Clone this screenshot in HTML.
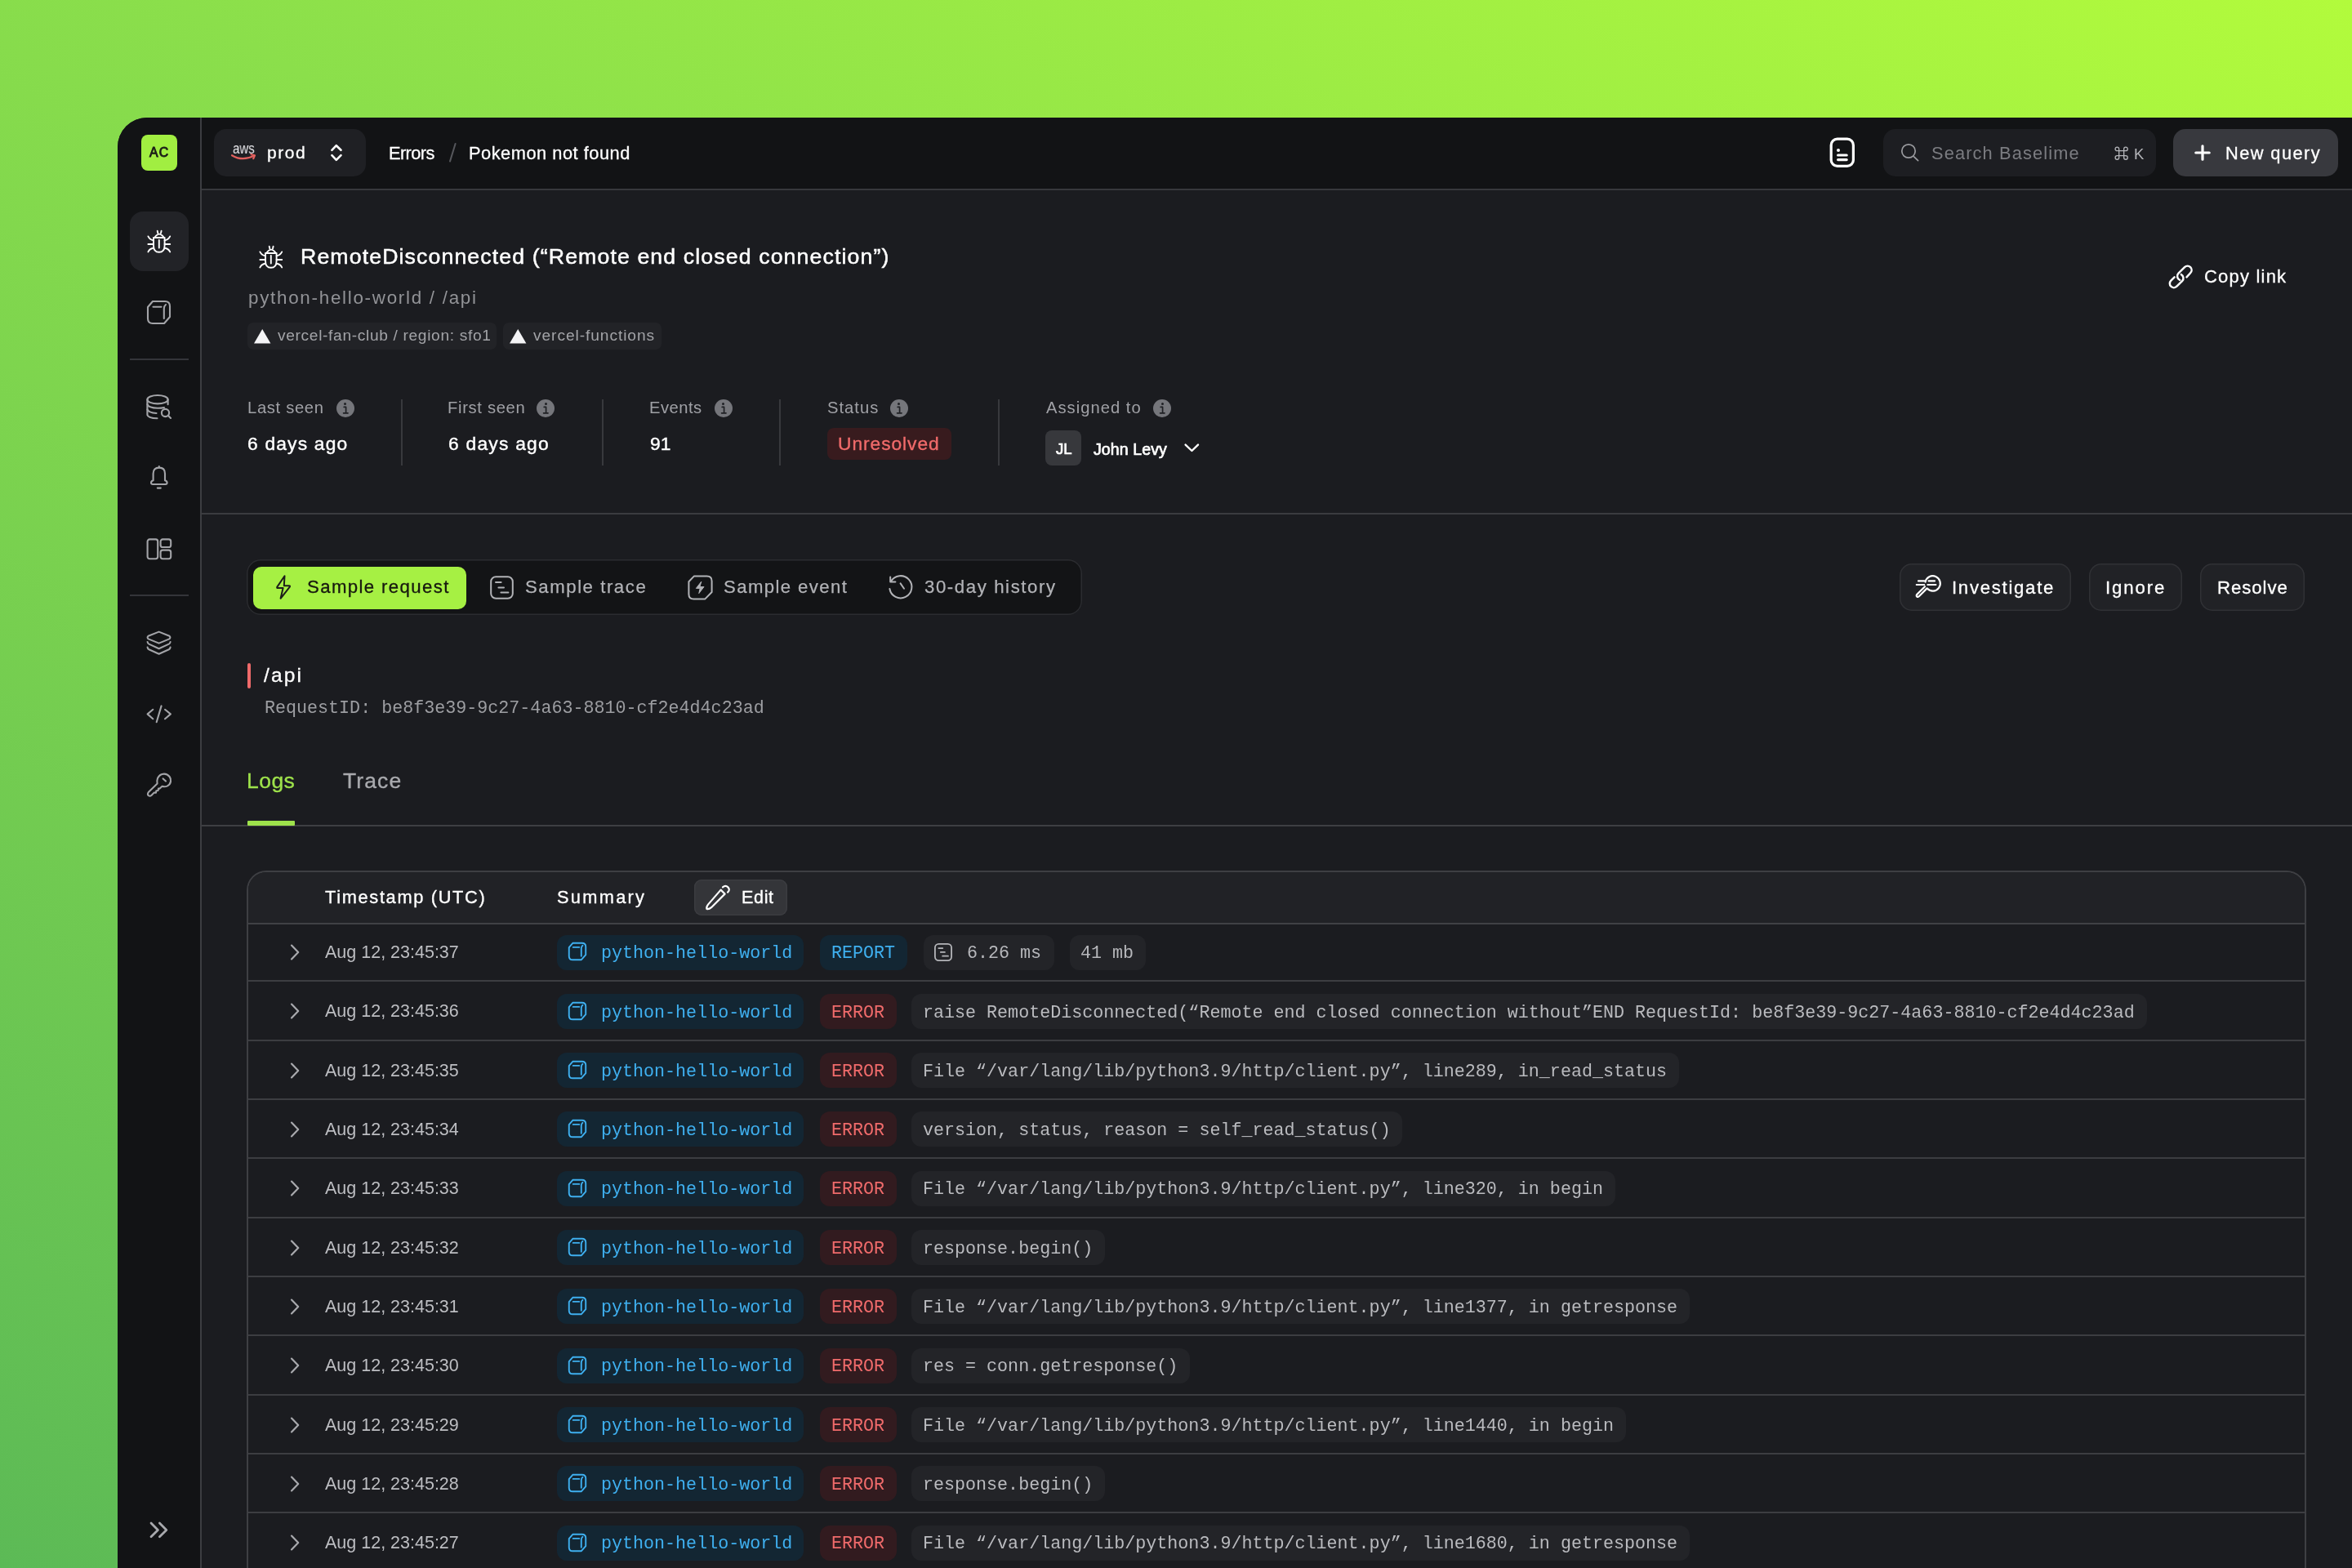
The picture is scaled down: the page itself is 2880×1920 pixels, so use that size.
<!DOCTYPE html>
<html><head><meta charset="utf-8"><style>
html,body{margin:0;padding:0;width:2880px;height:1920px;overflow:hidden}
body{position:relative;background:linear-gradient(30deg,#5cba56 0%,#8bdf4b 57%,#b2fb3c 100%);font-family:"Liberation Sans",sans-serif}
.a{position:absolute}
.t{white-space:nowrap;will-change:transform}
.S{font-family:"Liberation Sans",sans-serif}
.M{font-family:"Liberation Mono",monospace}
svg{overflow:visible}
</style></head><body>
<div class="a" style="left:144px;top:144px;width:2736px;height:1776px;background:#1b1c20;border-top-left-radius:36px;overflow:hidden"><div class="a" style="left:0;top:0;width:102px;height:1776px;background:#121315"></div><div class="a" style="left:102px;top:0;width:2634px;height:87px;background:#121315"></div></div>
<div class="a" style="left:245px;top:144px;width:2px;height:1776px;background:#3c3d41;"></div>
<div class="a" style="left:247px;top:230.5px;width:2633px;height:2px;background:#37383c;"></div>
<div class="a" style="left:173px;top:165px;width:44px;height:44px;background:#a1ee41;border-radius:8px;"></div>
<div class="a t S" style="left:183.30px;top:179.13px;font-size:15.8px;line-height:15.8px;color:#1c1e18;letter-spacing:1.164px;-webkit-text-stroke:0.9px #1c1e18;">AC</div>
<div class="a" style="left:159px;top:259px;width:72px;height:73px;background:#222327;border-radius:16px;"></div>
<div class="a" style="left:159px;top:439px;width:72px;height:2px;background:#34353a;"></div>
<div class="a" style="left:159px;top:728px;width:72px;height:2px;background:#34353a;"></div>
<svg class="a" style="left:180px;top:282px;" width="30" height="28" viewBox="0 0 30 28" fill="none" stroke="#ffffff" stroke-width="1.9" stroke-linecap="round" stroke-linejoin="round"><path d="M12.7 0.8 L13.3 3.4 M17.6 0.8 L17 3.4"/><path d="M9.4 8.8 Q15 0.4 20.6 8.8"/><path d="M8 9 H21.6 V18.5 Q21.6 26.8 14.8 26.8 Q8 26.8 8 18.5 Z"/><path d="M14.8 12 V21.6"/><path d="M1.4 7.4 Q3.5 11.6 8 12.4 M28.2 7.4 Q26.1 11.6 21.6 12.4"/><path d="M1.4 17 H8 M21.6 17 H28.2"/><path d="M1.4 26.4 Q3.5 22.4 8 21.8 M28.2 26.4 Q26.1 22.4 21.6 21.8"/></svg>
<svg class="a" style="left:180px;top:368px;" width="30" height="30" viewBox="0 0 30 30" fill="none" stroke="#a3a4a8" stroke-width="2.1" stroke-linecap="round" stroke-linejoin="round"><path d="M7.00 1.00 H22.00 Q28.00 1.00 28.00 7.00 V20.00 L21.00 28.00 H7.00 Q1.00 28.00 1.00 22.00 V8.00 Z"/><path d="M7.50 7.80 H17.50"/><path d="M20.80 22.00 V10.00 Q20.80 6.80 23.00 5.00"/></svg>
<svg class="a" style="left:179px;top:482px;" width="32" height="32" viewBox="0 0 32 32" fill="none" stroke="#a3a4a8" stroke-width="2.1" stroke-linecap="round" stroke-linejoin="round"><ellipse cx="14" cy="7.2" rx="12.6" ry="5.2"/><path d="M1.4 7.2 V25.4 Q1.4 30 13.5 30.3"/><path d="M26.6 7.2 V13.2"/><path d="M1.4 13.2 Q3 17.6 14 17.8 Q19 17.8 22 17"/><path d="M1.4 19.4 Q3 23.4 12.5 24"/><circle cx="23.5" cy="23.5" r="4.6"/><path d="M26.8 26.8 L30 30"/></svg>
<svg class="a" style="left:183px;top:569px;" width="24" height="32" viewBox="0 0 24 32" fill="none" stroke="#a3a4a8" stroke-width="2.1" stroke-linecap="round" stroke-linejoin="round"><path d="M11.8 2 V3.4"/><path d="M4.6 19.2 V11 Q4.6 3.6 11.8 3.6 Q19 3.6 19 11 V19.2 Q21.6 20 21.6 22 Q21.6 24 19.6 24 H4 Q2 24 2 22 Q2 20 4.6 19.2 Z"/><path d="M9.8 28.6 H13.8"/></svg>
<svg class="a" style="left:179px;top:659px;" width="32" height="27" viewBox="0 0 32 27" fill="none" stroke="#a3a4a8" stroke-width="2.1" stroke-linecap="round" stroke-linejoin="round"><rect x="1.6" y="1.4" width="12.6" height="23.8" rx="2.6"/><rect x="17.6" y="1.4" width="12.6" height="9.6" rx="2.6"/><rect x="17.6" y="14.6" width="12.6" height="10.6" rx="2.6"/></svg>
<svg class="a" style="left:179px;top:772px;" width="32" height="32" viewBox="0 0 32 32" fill="none" stroke="#a3a4a8" stroke-width="2.1" stroke-linecap="round" stroke-linejoin="round"><path d="M15.6 1.6 L28.4 6.8 Q30.4 8.6 28.4 10.4 L15.6 15.6 L2.6 10.4 Q0.6 8.6 2.6 6.8 Z"/><path d="M1.6 14 Q1.8 15.8 3.4 16.6 L15.6 22.2 L27.8 16.6 Q29.4 15.8 29.6 14"/><path d="M1.6 20.6 Q1.8 22.4 3.4 23.2 L15.6 28.8 L27.8 23.2 Q29.4 22.4 29.6 20.6"/></svg>
<svg class="a" style="left:179px;top:862px;" width="32" height="24" viewBox="0 0 32 24" fill="none" stroke="#a3a4a8" stroke-width="2.1" stroke-linecap="round" stroke-linejoin="round"><path d="M8.3 6.8 L1.6 12.4 L8.3 18.2"/><path d="M18.6 2.4 L12.7 22.3"/><path d="M23 6.8 L29.9 12.4 L23 18.2"/></svg>
<svg class="a" style="left:179px;top:946px;" width="32" height="32" viewBox="0 0 32 32" fill="none" stroke="#a3a4a8" stroke-width="2.1" stroke-linecap="round" stroke-linejoin="round"><path d="M22 1.6 Q26 1.6 28.6 5 Q30.6 7.6 30 11 Q29.4 14.6 25.6 16.6 Q22.6 17.8 19.6 16.8 L16.6 19.6 L15 19.6 L14.6 22 L12.4 22.2 L12 24.6 L9.6 24.6 L6.6 27.8 Q4.6 29.6 2.6 28 Q1.2 26.4 2.8 24 L13.6 13.4 Q12.8 10.4 14 7 Q16.4 1.6 22 1.6 Z"/><path d="M20.6 7.4 L24 10.6"/></svg>
<svg class="a" style="left:180.5px;top:1862px;" width="30" height="24" viewBox="0 0 30 24" fill="none" stroke="#a8a9ad" stroke-width="2.8" stroke-linecap="round" stroke-linejoin="round"><path d="M4 3 L12.4 11.4 L4 19.8"/><path d="M14.4 3 L22.8 11.4 L14.4 19.8"/></svg>
<div class="a" style="left:261.5px;top:158px;width:186.5px;height:58px;background:#1f2024;border-radius:15px;"></div>
<div class="a t S" style="left:284.50px;top:173.99px;font-size:17.5px;line-height:17.5px;color:#e6e6ea;transform:scaleX(0.86);transform-origin:0 0;">aws</div>
<svg class="a" style="left:282px;top:186px;" width="34" height="12" viewBox="0 0 34 12" fill="none" stroke="#e2605e" stroke-width="2.2" stroke-linecap="round" stroke-linejoin="round"><path d="M2 4.2 Q15 12 29 4.6"/><path d="M25.6 3.2 L30 4.2 L28.2 8.2"/></svg>
<div class="a t S" style="left:326.90px;top:175.62px;font-size:21px;line-height:21px;color:#ffffff;letter-spacing:1.549px;-webkit-text-stroke:0.3px #ffffff;">prod</div>
<svg class="a" style="left:403px;top:175px;" width="18" height="24" viewBox="0 0 18 24" fill="none" stroke="#ffffff" stroke-width="2.6" stroke-linecap="round" stroke-linejoin="round"><path d="M3.4 8.8 L8.8 3.2 L14.5 8.8"/><path d="M3.4 15.2 L8.8 20.9 L14.5 15.2"/></svg>
<div class="a t S" style="left:476.30px;top:176.95px;font-size:21.8px;line-height:21.8px;color:#ffffff;letter-spacing:-0.587px;-webkit-text-stroke:0.3px #ffffff;">Errors</div>
<svg class="a" style="left:546px;top:172px;" width="16" height="30" viewBox="0 0 16 30" fill="none" stroke="#56575c" stroke-width="2" stroke-linecap="round" stroke-linejoin="round"><path d="M11.6 4 L5 25.6"/></svg>
<div class="a t S" style="left:573.80px;top:176.95px;font-size:21.8px;line-height:21.8px;color:#ffffff;letter-spacing:0.518px;-webkit-text-stroke:0.3px #ffffff;">Pokemon not found</div>
<svg class="a" style="left:2238px;top:166px;" width="36" height="42" viewBox="0 0 36 42" fill="none" stroke="#ffffff" stroke-width="3.2" stroke-linecap="round" stroke-linejoin="round"><rect x="4.2" y="4.2" width="27.2" height="33.2" rx="7.5"/><path d="M12.6 24 H23.2 M12.6 29.6 H23.2"/></svg>
<div class="a" style="left:2250.7px;top:181.6px;width:4.2px;height:4.2px;border-radius:50%;background:#fff;margin-left:-2.1px;margin-top:0px"></div>
<div class="a" style="left:2306px;top:158px;width:333.5px;height:58px;background:#1d1e22;border-radius:15px;"></div>
<svg class="a" style="left:2324px;top:173px;" width="30" height="30" viewBox="0 0 30 30" fill="none" stroke="#9a9b9f" stroke-width="1.7" stroke-linecap="round" stroke-linejoin="round"><circle cx="13" cy="12" r="8.2"/><path d="M19.6 18.8 L24.6 23.6"/></svg>
<div class="a t S" style="left:2364.50px;top:177.05px;font-size:21.8px;line-height:21.8px;color:#7b7c81;letter-spacing:1.133px;">Search Baselime</div>
<svg class="a" style="left:2587.5px;top:177.5px;transform:scale(0.88);transform-origin:0 0;" width="24" height="22" viewBox="0 0 24 22" fill="none" stroke="#b4b5b9" stroke-width="1.5" stroke-linecap="round" stroke-linejoin="round"><path d="M7.6 7.6 H14.4 V14.4 H7.6 Z"/><path d="M7.6 7.6 V5 A2.6 2.6 0 1 0 5 7.6 H7.6 M14.4 7.6 V5 A2.6 2.6 0 1 1 17 7.6 H14.4 M14.4 14.4 V17 A2.6 2.6 0 1 0 17 14.4 H14.4 M7.6 14.4 V17 A2.6 2.6 0 1 1 5 14.4 H7.6"/></svg>
<div class="a t S" style="left:2612.90px;top:179.64px;font-size:18.5px;line-height:18.5px;color:#b4b5b9;">K</div>
<div class="a" style="left:2661.2px;top:158px;width:202px;height:58px;background:#38393e;border-radius:15px;"></div>
<svg class="a" style="left:2684px;top:174px;" width="26" height="26" viewBox="0 0 26 26" fill="none" stroke="#ffffff" stroke-width="3.2" stroke-linecap="round" stroke-linejoin="round"><path d="M13 4.8 V21.2 M4.8 13 H21.2"/></svg>
<div class="a t S" style="left:2725.30px;top:177.05px;font-size:21.8px;line-height:21.8px;color:#ffffff;letter-spacing:1.427px;-webkit-text-stroke:0.3px #ffffff;">New query</div>
<svg class="a" style="left:317px;top:301px;" width="30" height="28" viewBox="0 0 30 28" fill="none" stroke="#ffffff" stroke-width="1.9" stroke-linecap="round" stroke-linejoin="round"><path d="M12.7 0.8 L13.3 3.4 M17.6 0.8 L17 3.4"/><path d="M9.4 8.8 Q15 0.4 20.6 8.8"/><path d="M8 9 H21.6 V18.5 Q21.6 26.8 14.8 26.8 Q8 26.8 8 18.5 Z"/><path d="M14.8 12 V21.6"/><path d="M1.4 7.4 Q3.5 11.6 8 12.4 M28.2 7.4 Q26.1 11.6 21.6 12.4"/><path d="M1.4 17 H8 M21.6 17 H28.2"/><path d="M1.4 26.4 Q3.5 22.4 8 21.8 M28.2 26.4 Q26.1 22.4 21.6 21.8"/></svg>
<div class="a t S" style="left:367.60px;top:300.90px;font-size:26.7px;line-height:26.7px;color:#ffffff;letter-spacing:1.115px;-webkit-text-stroke:0.5px #ffffff;">RemoteDisconnected (&#8220;Remote end closed connection&#8221;)</div>
<div class="a t S" style="left:303.60px;top:353.54px;font-size:22.4px;line-height:22.4px;color:#929397;letter-spacing:1.719px;">python-hello-world / /api</div>
<div class="a" style="left:303.1px;top:394.9px;width:305.3px;height:33px;background:#222327;border-radius:7px;"></div>
<svg class="a" style="left:309px;top:401px;" width="25" height="22" viewBox="0 0 25 22" fill="none" stroke="#a6a7ab" stroke-width="2" stroke-linecap="round" stroke-linejoin="round"><path d="M12.2 2 L22.4 19.4 H2 Z" fill="#f4f4f6" stroke="none"/></svg>
<div class="a t S" style="left:339.50px;top:401.35px;font-size:19.2px;line-height:19.2px;color:#a3a4a8;letter-spacing:0.648px;">vercel-fan-club / region: sfo1</div>
<div class="a" style="left:616.1px;top:394.9px;width:194px;height:33px;background:#222327;border-radius:7px;"></div>
<svg class="a" style="left:622px;top:401px;" width="25" height="22" viewBox="0 0 25 22" fill="none" stroke="#a6a7ab" stroke-width="2" stroke-linecap="round" stroke-linejoin="round"><path d="M12.2 2 L22.4 19.4 H2 Z" fill="#f4f4f6" stroke="none"/></svg>
<div class="a t S" style="left:652.50px;top:401.35px;font-size:19.2px;line-height:19.2px;color:#a3a4a8;letter-spacing:0.915px;">vercel-functions</div>
<svg class="a" style="left:2650px;top:320px;" width="40" height="38" viewBox="0 0 40 38" fill="none" stroke="#ffffff" stroke-width="2.5" stroke-linecap="round" stroke-linejoin="round"><path d="M27.50 19.30 L32.14 14.24 A5.0 5.0 0 0 0 25.06 7.16 L17.51 14.71 A5.0 5.0 0 0 0 19.18 22.89"/><path d="M20.85 16.14 A5.0 5.0 0 0 1 22.04 24.09 L15.39 30.74 A5.0 5.0 0 0 1 8.31 23.66 L12.60 19.40"/></svg>
<div class="a t S" style="left:2698.60px;top:328.08px;font-size:22px;line-height:22px;color:#ffffff;letter-spacing:1.202px;-webkit-text-stroke:0.3px #ffffff;">Copy link</div>
<div class="a t S" style="left:303.40px;top:489.20px;font-size:20.2px;line-height:20.2px;color:#a0a1a6;letter-spacing:0.673px;">Last seen</div>
<div class="a" style="left:411.7px;top:488.8px;width:22px;height:22px;border-radius:11px;background:#75767b"></div>
<svg class="a" style="left:411.7px;top:488.8px;" width="22" height="22" viewBox="0 0 22 22" fill="none" stroke="#1f2024" stroke-width="1.7" stroke-linecap="round" stroke-linejoin="round"><path d="M9.2 9.4 H11.6 V16.8 M8.6 16.8 H14" /></svg>
<div class="a" style="left:421.2px;top:493.2px;width:3px;height:3px;border-radius:50%;background:#1f2024"></div>
<div class="a t S" style="left:303.40px;top:531.90px;font-size:22.8px;line-height:22.8px;color:#ffffff;letter-spacing:1.183px;-webkit-text-stroke:0.4px #ffffff;">6 days ago</div>
<div class="a" style="left:490.5px;top:489px;width:2px;height:81px;background:#38393d;"></div>
<div class="a t S" style="left:548.30px;top:489.20px;font-size:20.2px;line-height:20.2px;color:#a0a1a6;letter-spacing:0.678px;">First seen</div>
<div class="a" style="left:657.4px;top:488.8px;width:22px;height:22px;border-radius:11px;background:#75767b"></div>
<svg class="a" style="left:657.4px;top:488.8px;" width="22" height="22" viewBox="0 0 22 22" fill="none" stroke="#1f2024" stroke-width="1.7" stroke-linecap="round" stroke-linejoin="round"><path d="M9.2 9.4 H11.6 V16.8 M8.6 16.8 H14" /></svg>
<div class="a" style="left:666.9px;top:493.2px;width:3px;height:3px;border-radius:50%;background:#1f2024"></div>
<div class="a t S" style="left:549.00px;top:531.90px;font-size:22.8px;line-height:22.8px;color:#ffffff;letter-spacing:1.238px;-webkit-text-stroke:0.4px #ffffff;">6 days ago</div>
<div class="a" style="left:737px;top:489px;width:2px;height:81px;background:#38393d;"></div>
<div class="a t S" style="left:795.00px;top:489.20px;font-size:20.2px;line-height:20.2px;color:#a0a1a6;letter-spacing:0.476px;">Events</div>
<div class="a" style="left:874.5px;top:488.8px;width:22px;height:22px;border-radius:11px;background:#75767b"></div>
<svg class="a" style="left:874.5px;top:488.8px;" width="22" height="22" viewBox="0 0 22 22" fill="none" stroke="#1f2024" stroke-width="1.7" stroke-linecap="round" stroke-linejoin="round"><path d="M9.2 9.4 H11.6 V16.8 M8.6 16.8 H14" /></svg>
<div class="a" style="left:884.0px;top:493.2px;width:3px;height:3px;border-radius:50%;background:#1f2024"></div>
<div class="a t S" style="left:795.50px;top:531.90px;font-size:22.8px;line-height:22.8px;color:#ffffff;-webkit-text-stroke:0.4px #ffffff;">91</div>
<div class="a" style="left:953.5px;top:489px;width:2px;height:81px;background:#38393d;"></div>
<div class="a t S" style="left:1012.60px;top:489.20px;font-size:20.2px;line-height:20.2px;color:#a0a1a6;letter-spacing:1.013px;">Status</div>
<div class="a" style="left:1089.6px;top:488.8px;width:22px;height:22px;border-radius:11px;background:#75767b"></div>
<svg class="a" style="left:1089.6px;top:488.8px;" width="22" height="22" viewBox="0 0 22 22" fill="none" stroke="#1f2024" stroke-width="1.7" stroke-linecap="round" stroke-linejoin="round"><path d="M9.2 9.4 H11.6 V16.8 M8.6 16.8 H14" /></svg>
<div class="a" style="left:1099.1px;top:493.2px;width:3px;height:3px;border-radius:50%;background:#1f2024"></div>
<div class="a" style="left:1012.6px;top:523.7px;width:152px;height:39.5px;background:#381b1e;border-radius:8px;"></div>
<div class="a t S" style="left:1026.00px;top:532.30px;font-size:22.8px;line-height:22.8px;color:#f06b6b;letter-spacing:0.930px;-webkit-text-stroke:0.35px #f06b6b;">Unresolved</div>
<div class="a" style="left:1221.5px;top:489px;width:2px;height:81px;background:#38393d;"></div>
<div class="a t S" style="left:1280.80px;top:489.20px;font-size:20.2px;line-height:20.2px;color:#a0a1a6;letter-spacing:1.014px;">Assigned to</div>
<div class="a" style="left:1412.3px;top:488.8px;width:22px;height:22px;border-radius:11px;background:#75767b"></div>
<svg class="a" style="left:1412.3px;top:488.8px;" width="22" height="22" viewBox="0 0 22 22" fill="none" stroke="#1f2024" stroke-width="1.7" stroke-linecap="round" stroke-linejoin="round"><path d="M9.2 9.4 H11.6 V16.8 M8.6 16.8 H14" /></svg>
<div class="a" style="left:1421.8px;top:493.2px;width:3px;height:3px;border-radius:50%;background:#1f2024"></div>
<div class="a" style="left:1280.2px;top:526.7px;width:43.5px;height:43.5px;background:#37383c;border-radius:8px;"></div>
<div class="a t S" style="left:1293.00px;top:541.26px;font-size:18.6px;line-height:18.6px;color:#ffffff;-webkit-text-stroke:0.7px #ffffff;">JL</div>
<div class="a t S" style="left:1339.00px;top:541.31px;font-size:19.6px;line-height:19.6px;color:#ffffff;letter-spacing:0.060px;-webkit-text-stroke:0.7px #ffffff;">John Levy</div>
<svg class="a" style="left:1447px;top:540px;" width="26" height="18" viewBox="0 0 26 18" fill="none" stroke="#ffffff" stroke-width="2.4" stroke-linecap="round" stroke-linejoin="round"><path d="M4.6 4.6 L12.4 12 L20 4.6"/></svg>
<div class="a" style="left:247px;top:628px;width:2633px;height:2px;background:#3a3b3f;"></div>
<div class="a" style="left:302.3px;top:685.4px;width:1023px;height:68px;background:#131416;border-radius:17px;box-shadow:inset 0 0 0 1.5px #2b2c30;"></div>
<div class="a" style="left:309.9px;top:693.5px;width:261px;height:52.6px;background:#a6f043;border-radius:10px;"></div>
<svg class="a" style="left:334px;top:702px;" width="26" height="34" viewBox="0 0 26 34" fill="none" stroke="#1c1d1a" stroke-width="2" stroke-linecap="round" stroke-linejoin="round"><path d="M13.5 3.2 L4.4 16.6 Q3.6 18 5.2 18 H11.6 L8.6 30.8 L19.8 16.6 Q20.6 15.2 19 15.2 H12.8 Z" transform="translate(1,0)"/></svg>
<div class="a t S" style="left:375.50px;top:707.71px;font-size:22.2px;line-height:22.2px;color:#17180f;letter-spacing:1.382px;-webkit-text-stroke:0.3px #17180f;">Sample request</div>
<svg class="a" style="left:599.5px;top:704.5px;" width="30" height="30" viewBox="0 0 30 30" fill="none" stroke="#b2b3b7" stroke-width="2" stroke-linecap="round" stroke-linejoin="round"><rect x="1.20" y="1.20" width="26.60" height="26.60" rx="6.00"/><path d="M7.00 8.00 H13.60 M10.40 14.40 H17.00 M13.40 20.60 H22.40"/></svg>
<div class="a t S" style="left:642.60px;top:708.21px;font-size:22.2px;line-height:22.2px;color:#b2b3b7;letter-spacing:1.547px;-webkit-text-stroke:0.25px #b2b3b7;">Sample trace</div>
<svg class="a" style="left:841.5px;top:703.5px;" width="31" height="31" viewBox="0 0 31 31" fill="none" stroke="#b2b3b7" stroke-width="2" stroke-linecap="round" stroke-linejoin="round"><path d="M8 1.4 H23.6 Q29.6 1.4 29.6 7.4 V21 L21.4 29.4 H7.4 Q1.4 29.4 1.4 23.4 V8.2 Z"/><path d="M16.6 8.4 L10.4 16.4 H15.2 L13.8 22.6 L20 14.6 H15.2 Z" fill="#b2b3b7" stroke-width="1"/></svg>
<div class="a t S" style="left:885.80px;top:708.21px;font-size:22.2px;line-height:22.2px;color:#b2b3b7;letter-spacing:1.390px;-webkit-text-stroke:0.25px #b2b3b7;">Sample event</div>
<svg class="a" style="left:1087px;top:703px;" width="32" height="32" viewBox="0 0 32 32" fill="none" stroke="#b2b3b7" stroke-width="2" stroke-linecap="round" stroke-linejoin="round"><path d="M4 9 A13.6 13.6 0 1 1 2.4 18"/><path d="M3.2 3.4 V9.6 H9.4"/><path d="M15.6 11.4 L20 17.8"/></svg>
<div class="a t S" style="left:1132.00px;top:708.21px;font-size:22.2px;line-height:22.2px;color:#b2b3b7;letter-spacing:1.595px;-webkit-text-stroke:0.25px #b2b3b7;">30-day history</div>
<div class="a" style="left:2326px;top:690px;width:210px;height:58px;background:#212226;border-radius:15px;box-shadow:inset 0 0 0 1.5px #303135;"></div>
<svg class="a" style="left:2344px;top:701.3px;" width="36" height="34" viewBox="0 0 36 34" fill="none" stroke="#ffffff" stroke-width="2.2" stroke-linecap="round" stroke-linejoin="round"><path d="M15.8 19.6 A9.2 9.2 0 1 0 13.6 11.6"/><path d="M17.6 10.4 H25 M16.4 15 H26.4"/><path d="M5 10.4 H12.2 M2.8 15 H12.2"/><path d="M15.4 19.6 L6 29 Q4.4 30.6 3.2 29.4 Q2 28.2 3.6 26.6 L13 17.2"/></svg>
<div class="a t S" style="left:2390.00px;top:709.01px;font-size:22.2px;line-height:22.2px;color:#ffffff;letter-spacing:1.703px;-webkit-text-stroke:0.3px #ffffff;">Investigate</div>
<div class="a" style="left:2558px;top:690px;width:113.5px;height:58px;background:#212226;border-radius:15px;box-shadow:inset 0 0 0 1.5px #303135;"></div>
<div class="a t S" style="left:2578.00px;top:709.01px;font-size:22.2px;line-height:22.2px;color:#ffffff;letter-spacing:1.886px;-webkit-text-stroke:0.3px #ffffff;">Ignore</div>
<div class="a" style="left:2694px;top:690px;width:128px;height:58px;background:#212226;border-radius:15px;box-shadow:inset 0 0 0 1.5px #303135;"></div>
<div class="a t S" style="left:2714.60px;top:709.01px;font-size:22.2px;line-height:22.2px;color:#ffffff;letter-spacing:0.930px;-webkit-text-stroke:0.3px #ffffff;">Resolve</div>
<div class="a" style="left:303px;top:812px;width:4px;height:31px;background:#ef6a6a;border-radius:2px;"></div>
<div class="a t S" style="left:322.60px;top:815.16px;font-size:24.5px;line-height:24.5px;color:#ffffff;letter-spacing:2.114px;-webkit-text-stroke:0.3px #ffffff;">/api</div>
<div class="a t M" style="left:324.30px;top:856.77px;font-size:21.7px;line-height:21.7px;color:#9d9ea2;">RequestID: be8f3e39-9c27-4a63-8810-cf2e4d4c23ad</div>
<div class="a t S" style="left:301.70px;top:943.17px;font-size:26.5px;line-height:26.5px;color:#9ee24b;letter-spacing:0.462px;-webkit-text-stroke:0.35px #9ee24b;">Logs</div>
<div class="a t S" style="left:420.00px;top:943.17px;font-size:26.5px;line-height:26.5px;color:#a9aaae;letter-spacing:1.096px;-webkit-text-stroke:0.35px #a9aaae;">Trace</div>
<div class="a" style="left:247px;top:1010.2px;width:2633px;height:2px;background:#3e3f43;"></div>
<div class="a" style="left:303px;top:1005px;width:58px;height:6px;background:#9ee24b;border-radius:1px;"></div>
<div class="a" style="left:302px;top:1066px;width:2522px;height:900px;border-radius:24px 24px 0 0;background:#1b1c20;box-shadow:inset 0 0 0 2px #3e3f43"></div>
<div class="a" style="left:304px;top:1068px;width:2518px;height:62px;border-radius:22px 22px 0 0;background:#212226"></div>
<div class="a" style="left:304px;top:1130px;width:2518px;height:2px;background:#404145;"></div>
<div class="a t S" style="left:398.10px;top:1088.15px;font-size:21.8px;line-height:21.8px;color:#ffffff;letter-spacing:1.672px;-webkit-text-stroke:0.35px #ffffff;">Timestamp (UTC)</div>
<div class="a t S" style="left:681.70px;top:1088.15px;font-size:21.8px;line-height:21.8px;color:#ffffff;letter-spacing:2.291px;-webkit-text-stroke:0.35px #ffffff;">Summary</div>
<div class="a" style="left:849.5px;top:1076.8px;width:114.3px;height:44.1px;background:#343539;border-radius:9px;box-shadow:inset 0 0 0 1.5px #3b3c40;"></div>
<svg class="a" style="left:862px;top:1082px;" width="34" height="34" viewBox="0 0 34 34" fill="none" stroke="#ffffff" stroke-width="2.2" stroke-linecap="round" stroke-linejoin="round"><path d="M20.6 7.6 L25.6 12.6 L9 29.2 Q6 31.8 3.4 31 Q2.6 28.4 5.2 25.4 Z"/><path d="M23 4.4 Q26.4 1.4 29.4 4.4 Q32.4 7.4 29 10.6"/></svg>
<div class="a t S" style="left:907.75px;top:1088.32px;font-size:21.6px;line-height:21.6px;color:#ffffff;letter-spacing:0.613px;-webkit-text-stroke:0.35px #ffffff;">Edit</div>
<div class="a" style="left:304px;top:1200.3px;width:2518px;height:2px;background:#3c3d41;"></div>
<svg class="a" style="left:350px;top:1152.0px;" width="22" height="28" viewBox="0 0 22 28" fill="none" stroke="#a9aaae" stroke-width="2.2" stroke-linecap="round" stroke-linejoin="round"><path d="M7 5.6 L15.2 14 L7 22.4"/></svg>
<div class="a t S" style="left:398.10px;top:1156.00px;font-size:21.5px;line-height:21.5px;color:#bdbec2;">Aug 12, 23:45:37</div>
<div class="a" style="left:681.6px;top:1144.5px;width:302px;height:43px;background:#132633;border-radius:12px;"></div>
<svg class="a" style="left:695.5px;top:1154.4px;" width="23" height="23" viewBox="0 0 23 23" fill="none" stroke="#3fb0f0" stroke-width="1.9" stroke-linecap="round" stroke-linejoin="round"><path d="M5.31 0.76 H16.69 Q21.24 0.76 21.24 5.31 V15.17 L15.93 21.24 H5.31 Q0.76 21.24 0.76 16.69 V6.07 Z"/><path d="M5.69 5.92 H13.28"/><path d="M15.78 16.69 V7.59 Q15.78 5.16 17.45 3.79"/></svg>
<div class="a t M" style="left:735.80px;top:1157.17px;font-size:21.7px;line-height:21.7px;color:#3fb0f0;">python-hello-world</div>
<div class="a" style="left:1003.8px;top:1144.5px;width:107.7px;height:43px;background:#132633;border-radius:12px;"></div>
<div class="a t M" style="left:1018.10px;top:1157.17px;font-size:21.7px;line-height:21.7px;color:#3fb0f0;">REPORT</div>
<div class="a" style="left:1130.5px;top:1144.5px;width:160.5px;height:43px;background:#232428;border-radius:12px;"></div>
<svg class="a" style="left:1144.2px;top:1155.0px;" width="23" height="23" viewBox="0 0 23 23" fill="none" stroke="#b4b5b9" stroke-width="1.8" stroke-linecap="round" stroke-linejoin="round"><rect x="0.91" y="0.91" width="20.18" height="20.18" rx="4.55"/><path d="M5.31 6.07 H10.32 M7.89 10.92 H12.90 M10.17 15.63 H16.99"/></svg>
<div class="a t M" style="left:1183.90px;top:1157.17px;font-size:21.7px;line-height:21.7px;color:#b6b7bb;">6.26 ms</div>
<div class="a" style="left:1309.8px;top:1144.5px;width:93.2px;height:43px;background:#232428;border-radius:12px;"></div>
<div class="a t M" style="left:1323.00px;top:1157.17px;font-size:21.7px;line-height:21.7px;color:#b6b7bb;">41 mb</div>
<div class="a" style="left:304px;top:1272.6299999999999px;width:2518px;height:2px;background:#3c3d41;"></div>
<svg class="a" style="left:350px;top:1224.33px;" width="22" height="28" viewBox="0 0 22 28" fill="none" stroke="#a9aaae" stroke-width="2.2" stroke-linecap="round" stroke-linejoin="round"><path d="M7 5.6 L15.2 14 L7 22.4"/></svg>
<div class="a t S" style="left:398.10px;top:1228.33px;font-size:21.5px;line-height:21.5px;color:#bdbec2;">Aug 12, 23:45:36</div>
<div class="a" style="left:681.6px;top:1216.83px;width:302px;height:43px;background:#132633;border-radius:12px;"></div>
<svg class="a" style="left:695.5px;top:1226.73px;" width="23" height="23" viewBox="0 0 23 23" fill="none" stroke="#3fb0f0" stroke-width="1.9" stroke-linecap="round" stroke-linejoin="round"><path d="M5.31 0.76 H16.69 Q21.24 0.76 21.24 5.31 V15.17 L15.93 21.24 H5.31 Q0.76 21.24 0.76 16.69 V6.07 Z"/><path d="M5.69 5.92 H13.28"/><path d="M15.78 16.69 V7.59 Q15.78 5.16 17.45 3.79"/></svg>
<div class="a t M" style="left:735.80px;top:1229.50px;font-size:21.7px;line-height:21.7px;color:#3fb0f0;">python-hello-world</div>
<div class="a" style="left:1003.8px;top:1216.83px;width:94px;height:43px;background:#321b1f;border-radius:12px;"></div>
<div class="a t M" style="left:1018.10px;top:1229.50px;font-size:21.7px;line-height:21.7px;color:#f06b6b;">ERROR</div>
<div class="a" style="left:1116px;top:1216.83px;width:1512.78px;height:43px;background:#232428;border-radius:12px;"></div>
<div class="a t M" style="left:1129.90px;top:1229.50px;font-size:21.7px;line-height:21.7px;color:#babbbf;">raise RemoteDisconnected(&#8220;Remote end closed connection without&#8221;END RequestId: be8f3e39-9c27-4a63-8810-cf2e4d4c23ad</div>
<div class="a" style="left:304px;top:1344.96px;width:2518px;height:2px;background:#3c3d41;"></div>
<svg class="a" style="left:350px;top:1296.66px;" width="22" height="28" viewBox="0 0 22 28" fill="none" stroke="#a9aaae" stroke-width="2.2" stroke-linecap="round" stroke-linejoin="round"><path d="M7 5.6 L15.2 14 L7 22.4"/></svg>
<div class="a t S" style="left:398.10px;top:1300.66px;font-size:21.5px;line-height:21.5px;color:#bdbec2;">Aug 12, 23:45:35</div>
<div class="a" style="left:681.6px;top:1289.16px;width:302px;height:43px;background:#132633;border-radius:12px;"></div>
<svg class="a" style="left:695.5px;top:1299.0600000000002px;" width="23" height="23" viewBox="0 0 23 23" fill="none" stroke="#3fb0f0" stroke-width="1.9" stroke-linecap="round" stroke-linejoin="round"><path d="M5.31 0.76 H16.69 Q21.24 0.76 21.24 5.31 V15.17 L15.93 21.24 H5.31 Q0.76 21.24 0.76 16.69 V6.07 Z"/><path d="M5.69 5.92 H13.28"/><path d="M15.78 16.69 V7.59 Q15.78 5.16 17.45 3.79"/></svg>
<div class="a t M" style="left:735.80px;top:1301.83px;font-size:21.7px;line-height:21.7px;color:#3fb0f0;">python-hello-world</div>
<div class="a" style="left:1003.8px;top:1289.16px;width:94px;height:43px;background:#321b1f;border-radius:12px;"></div>
<div class="a t M" style="left:1018.10px;top:1301.83px;font-size:21.7px;line-height:21.7px;color:#f06b6b;">ERROR</div>
<div class="a" style="left:1116px;top:1289.16px;width:939.9px;height:43px;background:#232428;border-radius:12px;"></div>
<div class="a t M" style="left:1129.90px;top:1301.83px;font-size:21.7px;line-height:21.7px;color:#babbbf;">File &#8220;/var/lang/lib/python3.9/http/client.py&#8221;, line289, in_read_status</div>
<div class="a" style="left:304px;top:1417.29px;width:2518px;height:2px;background:#3c3d41;"></div>
<svg class="a" style="left:350px;top:1368.99px;" width="22" height="28" viewBox="0 0 22 28" fill="none" stroke="#a9aaae" stroke-width="2.2" stroke-linecap="round" stroke-linejoin="round"><path d="M7 5.6 L15.2 14 L7 22.4"/></svg>
<div class="a t S" style="left:398.10px;top:1372.99px;font-size:21.5px;line-height:21.5px;color:#bdbec2;">Aug 12, 23:45:34</div>
<div class="a" style="left:681.6px;top:1361.49px;width:302px;height:43px;background:#132633;border-radius:12px;"></div>
<svg class="a" style="left:695.5px;top:1371.39px;" width="23" height="23" viewBox="0 0 23 23" fill="none" stroke="#3fb0f0" stroke-width="1.9" stroke-linecap="round" stroke-linejoin="round"><path d="M5.31 0.76 H16.69 Q21.24 0.76 21.24 5.31 V15.17 L15.93 21.24 H5.31 Q0.76 21.24 0.76 16.69 V6.07 Z"/><path d="M5.69 5.92 H13.28"/><path d="M15.78 16.69 V7.59 Q15.78 5.16 17.45 3.79"/></svg>
<div class="a t M" style="left:735.80px;top:1374.16px;font-size:21.7px;line-height:21.7px;color:#3fb0f0;">python-hello-world</div>
<div class="a" style="left:1003.8px;top:1361.49px;width:94px;height:43px;background:#321b1f;border-radius:12px;"></div>
<div class="a t M" style="left:1018.10px;top:1374.16px;font-size:21.7px;line-height:21.7px;color:#f06b6b;">ERROR</div>
<div class="a" style="left:1116px;top:1361.49px;width:601.38px;height:43px;background:#232428;border-radius:12px;"></div>
<div class="a t M" style="left:1129.90px;top:1374.16px;font-size:21.7px;line-height:21.7px;color:#babbbf;">version, status, reason = self_read_status()</div>
<div class="a" style="left:304px;top:1489.62px;width:2518px;height:2px;background:#3c3d41;"></div>
<svg class="a" style="left:350px;top:1441.32px;" width="22" height="28" viewBox="0 0 22 28" fill="none" stroke="#a9aaae" stroke-width="2.2" stroke-linecap="round" stroke-linejoin="round"><path d="M7 5.6 L15.2 14 L7 22.4"/></svg>
<div class="a t S" style="left:398.10px;top:1445.32px;font-size:21.5px;line-height:21.5px;color:#bdbec2;">Aug 12, 23:45:33</div>
<div class="a" style="left:681.6px;top:1433.82px;width:302px;height:43px;background:#132633;border-radius:12px;"></div>
<svg class="a" style="left:695.5px;top:1443.72px;" width="23" height="23" viewBox="0 0 23 23" fill="none" stroke="#3fb0f0" stroke-width="1.9" stroke-linecap="round" stroke-linejoin="round"><path d="M5.31 0.76 H16.69 Q21.24 0.76 21.24 5.31 V15.17 L15.93 21.24 H5.31 Q0.76 21.24 0.76 16.69 V6.07 Z"/><path d="M5.69 5.92 H13.28"/><path d="M15.78 16.69 V7.59 Q15.78 5.16 17.45 3.79"/></svg>
<div class="a t M" style="left:735.80px;top:1446.49px;font-size:21.7px;line-height:21.7px;color:#3fb0f0;">python-hello-world</div>
<div class="a" style="left:1003.8px;top:1433.82px;width:94px;height:43px;background:#321b1f;border-radius:12px;"></div>
<div class="a t M" style="left:1018.10px;top:1446.49px;font-size:21.7px;line-height:21.7px;color:#f06b6b;">ERROR</div>
<div class="a" style="left:1116px;top:1433.82px;width:861.78px;height:43px;background:#232428;border-radius:12px;"></div>
<div class="a t M" style="left:1129.90px;top:1446.49px;font-size:21.7px;line-height:21.7px;color:#babbbf;">File &#8220;/var/lang/lib/python3.9/http/client.py&#8221;, line320, in begin</div>
<div class="a" style="left:304px;top:1561.9499999999998px;width:2518px;height:2px;background:#3c3d41;"></div>
<svg class="a" style="left:350px;top:1513.65px;" width="22" height="28" viewBox="0 0 22 28" fill="none" stroke="#a9aaae" stroke-width="2.2" stroke-linecap="round" stroke-linejoin="round"><path d="M7 5.6 L15.2 14 L7 22.4"/></svg>
<div class="a t S" style="left:398.10px;top:1517.65px;font-size:21.5px;line-height:21.5px;color:#bdbec2;">Aug 12, 23:45:32</div>
<div class="a" style="left:681.6px;top:1506.15px;width:302px;height:43px;background:#132633;border-radius:12px;"></div>
<svg class="a" style="left:695.5px;top:1516.0500000000002px;" width="23" height="23" viewBox="0 0 23 23" fill="none" stroke="#3fb0f0" stroke-width="1.9" stroke-linecap="round" stroke-linejoin="round"><path d="M5.31 0.76 H16.69 Q21.24 0.76 21.24 5.31 V15.17 L15.93 21.24 H5.31 Q0.76 21.24 0.76 16.69 V6.07 Z"/><path d="M5.69 5.92 H13.28"/><path d="M15.78 16.69 V7.59 Q15.78 5.16 17.45 3.79"/></svg>
<div class="a t M" style="left:735.80px;top:1518.82px;font-size:21.7px;line-height:21.7px;color:#3fb0f0;">python-hello-world</div>
<div class="a" style="left:1003.8px;top:1506.15px;width:94px;height:43px;background:#321b1f;border-radius:12px;"></div>
<div class="a t M" style="left:1018.10px;top:1518.82px;font-size:21.7px;line-height:21.7px;color:#f06b6b;">ERROR</div>
<div class="a" style="left:1116px;top:1506.15px;width:236.82px;height:43px;background:#232428;border-radius:12px;"></div>
<div class="a t M" style="left:1129.90px;top:1518.82px;font-size:21.7px;line-height:21.7px;color:#babbbf;">response.begin()</div>
<div class="a" style="left:304px;top:1634.28px;width:2518px;height:2px;background:#3c3d41;"></div>
<svg class="a" style="left:350px;top:1585.98px;" width="22" height="28" viewBox="0 0 22 28" fill="none" stroke="#a9aaae" stroke-width="2.2" stroke-linecap="round" stroke-linejoin="round"><path d="M7 5.6 L15.2 14 L7 22.4"/></svg>
<div class="a t S" style="left:398.10px;top:1589.98px;font-size:21.5px;line-height:21.5px;color:#bdbec2;">Aug 12, 23:45:31</div>
<div class="a" style="left:681.6px;top:1578.48px;width:302px;height:43px;background:#132633;border-radius:12px;"></div>
<svg class="a" style="left:695.5px;top:1588.38px;" width="23" height="23" viewBox="0 0 23 23" fill="none" stroke="#3fb0f0" stroke-width="1.9" stroke-linecap="round" stroke-linejoin="round"><path d="M5.31 0.76 H16.69 Q21.24 0.76 21.24 5.31 V15.17 L15.93 21.24 H5.31 Q0.76 21.24 0.76 16.69 V6.07 Z"/><path d="M5.69 5.92 H13.28"/><path d="M15.78 16.69 V7.59 Q15.78 5.16 17.45 3.79"/></svg>
<div class="a t M" style="left:735.80px;top:1591.15px;font-size:21.7px;line-height:21.7px;color:#3fb0f0;">python-hello-world</div>
<div class="a" style="left:1003.8px;top:1578.48px;width:94px;height:43px;background:#321b1f;border-radius:12px;"></div>
<div class="a t M" style="left:1018.10px;top:1591.15px;font-size:21.7px;line-height:21.7px;color:#f06b6b;">ERROR</div>
<div class="a" style="left:1116px;top:1578.48px;width:952.92px;height:43px;background:#232428;border-radius:12px;"></div>
<div class="a t M" style="left:1129.90px;top:1591.15px;font-size:21.7px;line-height:21.7px;color:#babbbf;">File &#8220;/var/lang/lib/python3.9/http/client.py&#8221;, line1377, in getresponse</div>
<div class="a" style="left:304px;top:1706.61px;width:2518px;height:2px;background:#3c3d41;"></div>
<svg class="a" style="left:350px;top:1658.31px;" width="22" height="28" viewBox="0 0 22 28" fill="none" stroke="#a9aaae" stroke-width="2.2" stroke-linecap="round" stroke-linejoin="round"><path d="M7 5.6 L15.2 14 L7 22.4"/></svg>
<div class="a t S" style="left:398.10px;top:1662.31px;font-size:21.5px;line-height:21.5px;color:#bdbec2;">Aug 12, 23:45:30</div>
<div class="a" style="left:681.6px;top:1650.81px;width:302px;height:43px;background:#132633;border-radius:12px;"></div>
<svg class="a" style="left:695.5px;top:1660.71px;" width="23" height="23" viewBox="0 0 23 23" fill="none" stroke="#3fb0f0" stroke-width="1.9" stroke-linecap="round" stroke-linejoin="round"><path d="M5.31 0.76 H16.69 Q21.24 0.76 21.24 5.31 V15.17 L15.93 21.24 H5.31 Q0.76 21.24 0.76 16.69 V6.07 Z"/><path d="M5.69 5.92 H13.28"/><path d="M15.78 16.69 V7.59 Q15.78 5.16 17.45 3.79"/></svg>
<div class="a t M" style="left:735.80px;top:1663.48px;font-size:21.7px;line-height:21.7px;color:#3fb0f0;">python-hello-world</div>
<div class="a" style="left:1003.8px;top:1650.81px;width:94px;height:43px;background:#321b1f;border-radius:12px;"></div>
<div class="a t M" style="left:1018.10px;top:1663.48px;font-size:21.7px;line-height:21.7px;color:#f06b6b;">ERROR</div>
<div class="a" style="left:1116px;top:1650.81px;width:340.98px;height:43px;background:#232428;border-radius:12px;"></div>
<div class="a t M" style="left:1129.90px;top:1663.48px;font-size:21.7px;line-height:21.7px;color:#babbbf;">res = conn.getresponse()</div>
<div class="a" style="left:304px;top:1778.94px;width:2518px;height:2px;background:#3c3d41;"></div>
<svg class="a" style="left:350px;top:1730.6399999999999px;" width="22" height="28" viewBox="0 0 22 28" fill="none" stroke="#a9aaae" stroke-width="2.2" stroke-linecap="round" stroke-linejoin="round"><path d="M7 5.6 L15.2 14 L7 22.4"/></svg>
<div class="a t S" style="left:398.10px;top:1734.64px;font-size:21.5px;line-height:21.5px;color:#bdbec2;">Aug 12, 23:45:29</div>
<div class="a" style="left:681.6px;top:1723.1399999999999px;width:302px;height:43px;background:#132633;border-radius:12px;"></div>
<svg class="a" style="left:695.5px;top:1733.04px;" width="23" height="23" viewBox="0 0 23 23" fill="none" stroke="#3fb0f0" stroke-width="1.9" stroke-linecap="round" stroke-linejoin="round"><path d="M5.31 0.76 H16.69 Q21.24 0.76 21.24 5.31 V15.17 L15.93 21.24 H5.31 Q0.76 21.24 0.76 16.69 V6.07 Z"/><path d="M5.69 5.92 H13.28"/><path d="M15.78 16.69 V7.59 Q15.78 5.16 17.45 3.79"/></svg>
<div class="a t M" style="left:735.80px;top:1735.81px;font-size:21.7px;line-height:21.7px;color:#3fb0f0;">python-hello-world</div>
<div class="a" style="left:1003.8px;top:1723.1399999999999px;width:94px;height:43px;background:#321b1f;border-radius:12px;"></div>
<div class="a t M" style="left:1018.10px;top:1735.81px;font-size:21.7px;line-height:21.7px;color:#f06b6b;">ERROR</div>
<div class="a" style="left:1116px;top:1723.1399999999999px;width:874.8px;height:43px;background:#232428;border-radius:12px;"></div>
<div class="a t M" style="left:1129.90px;top:1735.81px;font-size:21.7px;line-height:21.7px;color:#babbbf;">File &#8220;/var/lang/lib/python3.9/http/client.py&#8221;, line1440, in begin</div>
<div class="a" style="left:304px;top:1851.27px;width:2518px;height:2px;background:#3c3d41;"></div>
<svg class="a" style="left:350px;top:1802.97px;" width="22" height="28" viewBox="0 0 22 28" fill="none" stroke="#a9aaae" stroke-width="2.2" stroke-linecap="round" stroke-linejoin="round"><path d="M7 5.6 L15.2 14 L7 22.4"/></svg>
<div class="a t S" style="left:398.10px;top:1806.97px;font-size:21.5px;line-height:21.5px;color:#bdbec2;">Aug 12, 23:45:28</div>
<div class="a" style="left:681.6px;top:1795.47px;width:302px;height:43px;background:#132633;border-radius:12px;"></div>
<svg class="a" style="left:695.5px;top:1805.3700000000001px;" width="23" height="23" viewBox="0 0 23 23" fill="none" stroke="#3fb0f0" stroke-width="1.9" stroke-linecap="round" stroke-linejoin="round"><path d="M5.31 0.76 H16.69 Q21.24 0.76 21.24 5.31 V15.17 L15.93 21.24 H5.31 Q0.76 21.24 0.76 16.69 V6.07 Z"/><path d="M5.69 5.92 H13.28"/><path d="M15.78 16.69 V7.59 Q15.78 5.16 17.45 3.79"/></svg>
<div class="a t M" style="left:735.80px;top:1808.14px;font-size:21.7px;line-height:21.7px;color:#3fb0f0;">python-hello-world</div>
<div class="a" style="left:1003.8px;top:1795.47px;width:94px;height:43px;background:#321b1f;border-radius:12px;"></div>
<div class="a t M" style="left:1018.10px;top:1808.14px;font-size:21.7px;line-height:21.7px;color:#f06b6b;">ERROR</div>
<div class="a" style="left:1116px;top:1795.47px;width:236.82px;height:43px;background:#232428;border-radius:12px;"></div>
<div class="a t M" style="left:1129.90px;top:1808.14px;font-size:21.7px;line-height:21.7px;color:#babbbf;">response.begin()</div>
<svg class="a" style="left:350px;top:1875.3px;" width="22" height="28" viewBox="0 0 22 28" fill="none" stroke="#a9aaae" stroke-width="2.2" stroke-linecap="round" stroke-linejoin="round"><path d="M7 5.6 L15.2 14 L7 22.4"/></svg>
<div class="a t S" style="left:398.10px;top:1879.30px;font-size:21.5px;line-height:21.5px;color:#bdbec2;">Aug 12, 23:45:27</div>
<div class="a" style="left:681.6px;top:1867.8px;width:302px;height:43px;background:#132633;border-radius:12px;"></div>
<svg class="a" style="left:695.5px;top:1877.7px;" width="23" height="23" viewBox="0 0 23 23" fill="none" stroke="#3fb0f0" stroke-width="1.9" stroke-linecap="round" stroke-linejoin="round"><path d="M5.31 0.76 H16.69 Q21.24 0.76 21.24 5.31 V15.17 L15.93 21.24 H5.31 Q0.76 21.24 0.76 16.69 V6.07 Z"/><path d="M5.69 5.92 H13.28"/><path d="M15.78 16.69 V7.59 Q15.78 5.16 17.45 3.79"/></svg>
<div class="a t M" style="left:735.80px;top:1880.47px;font-size:21.7px;line-height:21.7px;color:#3fb0f0;">python-hello-world</div>
<div class="a" style="left:1003.8px;top:1867.8px;width:94px;height:43px;background:#321b1f;border-radius:12px;"></div>
<div class="a t M" style="left:1018.10px;top:1880.47px;font-size:21.7px;line-height:21.7px;color:#f06b6b;">ERROR</div>
<div class="a" style="left:1116px;top:1867.8px;width:952.92px;height:43px;background:#232428;border-radius:12px;"></div>
<div class="a t M" style="left:1129.90px;top:1880.47px;font-size:21.7px;line-height:21.7px;color:#babbbf;">File &#8220;/var/lang/lib/python3.9/http/client.py&#8221;, line1680, in getresponse</div>
</body></html>
